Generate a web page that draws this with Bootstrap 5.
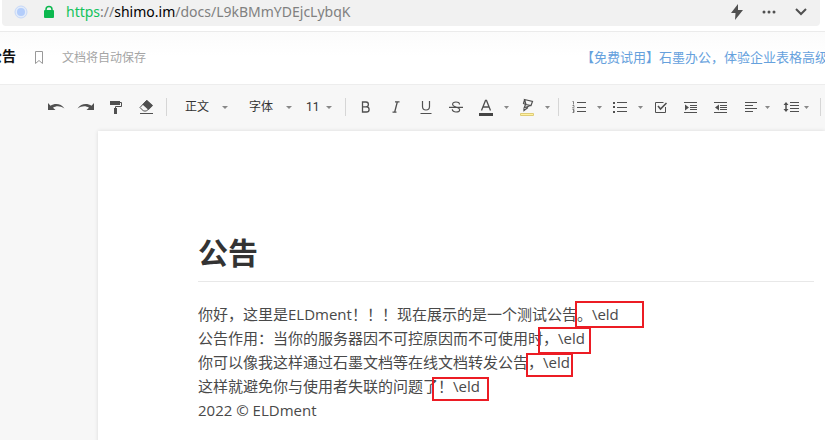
<!DOCTYPE html>
<html lang="zh-CN">
<head>
<meta charset="utf-8">
<meta name="viewport" content="width=device-width, initial-scale=1">
<title>公告</title>
<link href="https://cdn.jsdelivr.net/npm/bootstrap@5.3.0/dist/css/bootstrap.min.css" rel="stylesheet">
<style>
body { font-family: "Open Sans", "Noto Sans CJK SC", sans-serif; background: #f7f7f7; color: #494949; overflow: hidden; }
svg { display: block; flex: none; overflow: visible; }
.address-wrap { padding: 0 5px 5px 2px; }
.address { height: 26px; background: #f1f1f1; border-radius: 0 0 4px 4px; padding: 0 3px 2px 12px; }
.url { font-family: "Noto Sans", sans-serif; font-size: 14px; line-height: 24px; color: #808080; }
.url .scheme { color: #12c35c; }
.url .host { color: #000; }
.address .browser-btn { width: 32px; height: 24px; color: #505050; }
.doc-head { height: 53px; border-top: 1px solid #ebebeb; background: linear-gradient(#fbfbfb, #fff 24px); overflow: hidden; padding-bottom: 1px; }
.doc-name { font-size: 14px; line-height: 20px; padding-bottom: 4px; font-weight: 700; color: #111; margin-left: -12px; }
.doc-head .mark-btn { width: 46px; height: 30px; color: #999; }
.save-note { font-size: 12px; color: #a5a5a5; }
.promo { font-size: 13px; color: #66a1dd; width: 244px; overflow: hidden; }
.tools { height: 47px; padding: 0 0 2px 41px; background: #f7f7f7; border-top: 1px solid #ededed; overflow: hidden; }
.tools > * { flex: none; }
.tools .tool { width: 30px; height: 28px; color: #505050; }
.tools .tool-align { width: 26px; }
.tools .tool-lines { width: 28px; }
.tools .drop { width: 11px; height: 28px; color: #888; }
.rule { width: 1px; height: 18px; margin: 0 5px; background: #d6d6d6; }
.pick { appearance: none; border: 0; height: 28px; width: 64px; padding: 0 0 0 13px; font-size: 12px; color: #333; background: url("data:image/svg+xml,%3Csvg xmlns='http://www.w3.org/2000/svg' width='6' height='3'%3E%3Cpath d='M0 0h6L3 3z' fill='%23888'/%3E%3C/svg%3E") no-repeat right 8px center; }
.pick-size { width: 40px; padding-left: 6px; font-family: Roboto, sans-serif; }
.sheet { margin-left: 98px; padding: 100px 11px 24px 100px; min-height: calc(100vh - 131px); background: #fff; box-shadow: 0 0 4px rgba(0,0,0,.12); }
.sheet h1 { font-size: 30px; line-height: 44px; font-weight: 700; color: #333; margin: 0 0 20px; padding-bottom: 6px; border-bottom: 1px solid #e8e8e8; }
.sheet p { font-size: 15px; line-height: 24px; margin: 0; white-space: nowrap; }
.tag { position: relative; }
.tag::after { content: ""; position: absolute; border: 2px solid #ec1c24; }
.tag-a::after { left: -17px; top: -3px; width: 69px; height: 27px; }
.tag-b::after { left: -20px; top: -1px; width: 53px; height: 27px; }
.tag-c::after { left: -17px; top: 1px; width: 47px; height: 24px; }
.tag-d::after { left: -21px; top: 1px; width: 57px; height: 24px; }
</style>
<script src="https://cdn.jsdelivr.net/npm/bootstrap@5.3.0/dist/js/bootstrap.bundle.min.js"></script>
</head>
<body>
<div class="address-wrap bg-white">
  <div class="address d-flex align-items-center">
    <svg width="14" height="14" viewBox="0 0 14 14" aria-hidden="true"><circle cx="7" cy="7" r="6" fill="#e2ebfa" stroke="#c6d8f8"/><circle cx="7" cy="7" r="4" fill="#b3cdfb"/></svg>
    <svg class="ms-3" width="10" height="12" viewBox="0 0 10 12" aria-hidden="true"><path d="M2 6V3.500a3 3 0 0 1 6 0V6" fill="none" stroke="#0cb84f" stroke-width="1.500"/><rect y="4" width="10" height="8" rx="1" fill="#0cb84f"/></svg>
    <div class="url text-nowrap flex-grow-1 ps-2 ms-1"><span class="scheme">https</span>://<span class="host">shimo.im</span>/docs/L9kBMmYDEjcLybqK</div>
    <button class="browser-btn btn p-0 border-0 d-flex align-items-center justify-content-center" aria-label="极速模式"><svg width="14" height="16" viewBox="0 0 14 16"><path d="M8 0 1 9h4.500L5 16l8-10H8z" fill="currentColor"/></svg></button>
    <button class="browser-btn btn p-0 border-0 d-flex align-items-center justify-content-center" aria-label="更多"><svg width="14" height="4" viewBox="0 0 14 4" fill="currentColor"><circle cx="2" cy="2" r="1.500"/><circle cx="7" cy="2" r="1.500"/><circle cx="12" cy="2" r="1.500"/></svg></button>
    <button class="browser-btn btn p-0 border-0 d-flex align-items-center justify-content-center" aria-label="展开"><svg width="12" height="8" viewBox="0 0 12 8"><path d="m1 1 5 5 5-5" fill="none" stroke="currentColor" stroke-width="2"/></svg></button>
  </div>
</div>
<header class="doc-head d-flex align-items-center text-nowrap">
  <span class="doc-name">公告</span>
  <button class="mark-btn btn p-0 border-0 d-flex align-items-center justify-content-center" aria-label="收藏"><svg width="8" height="13" viewBox="0 0 8 13"><path d="M.500.500h7v12L4 9.500l-3.500 3z" fill="none" stroke="currentColor"/></svg></button>
  <span class="save-note">文档将自动保存</span>
  <a href="#" class="promo ms-auto text-decoration-none">【免费试用】石墨办公，体验企业表格高级</a>
</header>
<div class="tools d-flex align-items-center" role="toolbar" aria-label="编辑工具">
  <button class="tool btn p-0 border-0 d-flex align-items-center justify-content-center" aria-label="撤销"><svg width="18" height="8" viewBox="0 0 18 8" fill="currentColor"><path d="M1 0v7h7.500L6 4.700C9 2.800 13 2.500 17.500 5.500 14 0 7.500 0 3.500 2.700z"/></svg></button>
  <button class="tool btn p-0 border-0 d-flex align-items-center justify-content-center" aria-label="重做"><svg width="18" height="8" viewBox="0 0 18 8" fill="currentColor"><path d="M17 0v7H9.500L12 4.700C9 2.800 5 2.500.5 5.500 4 0 10.500 0 14.500 2.700z"/></svg></button>
  <button class="tool btn p-0 border-0 d-flex align-items-center justify-content-center" aria-label="格式刷"><svg width="14" height="14" viewBox="0 0 14 14"><path d="M1 1h10v4H1zM5 8h3v6H5z" fill="currentColor"/><path d="M11 2.500h1.500v4h-6V8" fill="none" stroke="currentColor"/></svg></button>
  <button class="tool btn p-0 border-0 d-flex align-items-center justify-content-center" aria-label="清除格式"><svg width="14" height="14" viewBox="0 0 14 14"><path d="m7.500.5 5.500 5L7.500 11h-3L1 7.500z" fill="none" stroke="currentColor"/><path d="m8 0 6 5.500L9.500 10 3.500 4.500z" fill="currentColor"/><path d="M1 13.500h13" stroke="currentColor"/></svg></button>
  <span class="rule"></span>
  <select class="pick" aria-label="段落样式"><option>正文</option></select>
  <select class="pick" aria-label="字体"><option>字体</option></select>
  <select class="pick pick-size" aria-label="字号"><option>11</option></select>
  <span class="rule"></span>
  <button class="tool btn p-0 border-0 d-flex align-items-center justify-content-center" aria-label="粗体"><svg width="10" height="12" viewBox="0 0 10 12"><path d="M1.500 1v10h4a2.600 2.600 0 0 0 0-5.200h-4H5a2.400 2.400 0 0 0 0-4.800z" fill="none" stroke="currentColor" stroke-width="1.300"/></svg></button>
  <button class="tool btn p-0 border-0 d-flex align-items-center justify-content-center" aria-label="斜体"><svg width="8" height="12" viewBox="0 0 8 12"><path d="M3 .800h4.500M.500 11.200h4M5.300 1 2.700 11" fill="none" stroke="currentColor" stroke-width="1.300"/></svg></button>
  <button class="tool btn p-0 border-0 d-flex align-items-center justify-content-center" aria-label="下划线"><svg width="12" height="14" viewBox="0 0 12 14"><path d="M2.500 1v5.500a3.500 3.500 0 0 0 7 0V1M.500 13.500h11" fill="none" stroke="currentColor" stroke-width="1.200"/></svg></button>
  <button class="tool btn p-0 border-0 d-flex align-items-center justify-content-center" aria-label="删除线"><svg width="14" height="12" viewBox="0 0 14 12"><path d="M10.500 3.500C10.500 1.800 9 1 7 1S3.600 2 3.600 3.500 5 5.300 7 6s3.700 1 3.700 2.700S9 11 7 11 3.300 10 3.300 8.300M0 6.300h14" fill="none" stroke="currentColor" stroke-width="1.200"/></svg></button>
  <button class="tool btn p-0 border-0 d-flex align-items-center justify-content-center" aria-label="文字颜色"><svg width="14" height="16" viewBox="0 0 14 16"><path d="m2.500 11.500 4-10h1l4 10M4 8h6" fill="none" stroke="currentColor" stroke-width="1.300"/><path d="M0 14h14v3H0z" fill="#444"/></svg></button>
  <button class="drop btn p-0 border-0 d-flex align-items-center justify-content-center" aria-label="选择文字颜色"><svg width="5" height="3" viewBox="0 0 5 3"><path d="M0 0h5L2.500 3z" fill="currentColor"/></svg></button>
  <button class="tool btn p-0 border-0 d-flex align-items-center justify-content-center" aria-label="高亮"><svg width="14" height="16" viewBox="0 0 14 16"><path d="m4.500.500 8 2-1.500 4-5-1zM4.500 1l-1 3.500 2 1-1.300 3.300 4.500-1.500L10 6.500M4 9v2.500l4-3" fill="none" stroke="currentColor" stroke-width="1.200"/><path d="M.500 14.500h13v2H.500z" fill="#fff2a0" stroke="#dfcc78"/></svg></button>
  <button class="drop btn p-0 border-0 d-flex align-items-center justify-content-center" aria-label="选择高亮颜色"><svg width="5" height="3" viewBox="0 0 5 3"><path d="M0 0h5L2.500 3z" fill="currentColor"/></svg></button>
  <span class="rule"></span>
  <button class="tool btn p-0 border-0 d-flex align-items-center justify-content-center" aria-label="有序列表"><svg width="14" height="12" viewBox="0 0 14 12" fill="none" stroke="currentColor"><path d="M5 1.500h9M5 6.500h9M5 10.500h9"/><path d="M.500.500h1v3M.500 4.500h1.500v1L.500 7H2.500M.500 8.500H2V10H1h1v1.500H.500" stroke-width=".7"/></svg></button>
  <button class="drop btn p-0 border-0 d-flex align-items-center justify-content-center" aria-label="有序列表样式"><svg width="5" height="3" viewBox="0 0 5 3"><path d="M0 0h5L2.500 3z" fill="currentColor"/></svg></button>
  <button class="tool btn p-0 border-0 d-flex align-items-center justify-content-center" aria-label="无序列表"><svg width="14" height="12" viewBox="0 0 14 12"><path d="M4 1.500h10M4 6.500h10M4 10.500h10" stroke="currentColor"/><path d="M0 1h2v2H0zM0 5h2v2H0zM0 10h2v2H0z" fill="currentColor"/></svg></button>
  <button class="drop btn p-0 border-0 d-flex align-items-center justify-content-center" aria-label="无序列表样式"><svg width="5" height="3" viewBox="0 0 5 3"><path d="M0 0h5L2.500 3z" fill="currentColor"/></svg></button>
  <button class="tool btn p-0 border-0 d-flex align-items-center justify-content-center" aria-label="任务列表"><svg width="12" height="12" viewBox="0 0 12 12" fill="none" stroke="currentColor"><path d="M8.500 1.500h-8v10h10V6"/><path d="m3 5 2.500 3L11.500 2" stroke-width="1.600"/></svg></button>
  <button class="tool btn p-0 border-0 d-flex align-items-center justify-content-center" aria-label="增加缩进"><svg width="14" height="12" viewBox="0 0 14 12"><path d="M0 1.500h13M6 4.500h7M6 8.500h7M6 6.500h7M0 11.500h13" stroke="currentColor"/><path d="m1 3.500 4 3-4 3z" fill="currentColor"/></svg></button>
  <button class="tool btn p-0 border-0 d-flex align-items-center justify-content-center" aria-label="减少缩进"><svg width="14" height="12" viewBox="0 0 14 12"><path d="M0 1.500h13M6 4.500h7M6 8.500h7M6 6.500h7M0 11.500h13" stroke="currentColor"/><path d="m5 3.500-4 3 4 3z" fill="currentColor"/></svg></button>
  <button class="tool tool-align btn p-0 border-0 d-flex align-items-center justify-content-center" aria-label="对齐"><svg width="20" height="12" viewBox="0 0 20 12"><path d="M6 1.500h12M6 4.500h8M6 7.500h12M6 10.500h8" stroke="currentColor"/></svg></button>
  <button class="drop btn p-0 border-0 d-flex align-items-center justify-content-center" aria-label="对齐方式"><svg width="5" height="3" viewBox="0 0 5 3"><path d="M0 0h5L2.500 3z" fill="currentColor"/></svg></button>
  <button class="tool tool-lines btn p-0 border-0 d-flex align-items-center justify-content-center" aria-label="行高"><svg width="24" height="12" viewBox="0 0 24 12"><path d="M15 1.500h9M15 4.500h9M15 7.500h9M15 10.500h9" stroke="currentColor"/><path d="M11 2v8" stroke="currentColor" stroke-width="1.500"/><path d="m8.500 4 2.500-3 2.500 3zM8.500 8l2.500 3 2.500-3z" fill="currentColor"/></svg></button>
  <button class="drop btn p-0 border-0 d-flex align-items-center justify-content-center" aria-label="选择行高"><svg width="5" height="3" viewBox="0 0 5 3"><path d="M0 0h5L2.500 3z" fill="currentColor"/></svg></button>
  <span class="rule ms-2"></span>
</div>
<main class="sheet">
  <h1>公告</h1>
  <p>你好，这里是ELDment！！！现在展示的是一个测试公告。<span class="tag tag-a">\eld</span></p>
  <p>公告作用：当你的服务器因不可控原因而不可使用时，<span class="tag tag-b">\eld</span></p>
  <p>你可以像我这样通过石墨文档等在线文档转发公告，<span class="tag tag-c">\eld</span></p>
  <p>这样就避免你与使用者失联的问题了！<span class="tag tag-d">\eld</span></p>
  <p>2022 © ELDment</p>
</main>
</body>
</html>
